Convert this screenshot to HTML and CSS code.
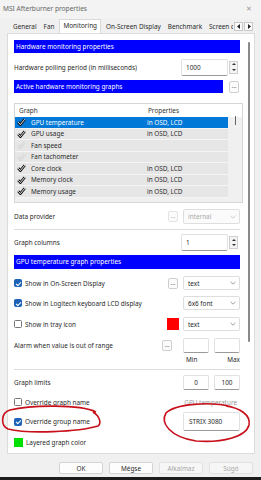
FILE: index.html
```html
<!DOCTYPE html>
<html lang="hu">
<head>
    <meta charset="UTF-8">
    <title>MSI Afterburner properties</title>
    <link rel="stylesheet" href="styles.css">
</head>
<body>
    <div class="window">
        <div class="titlebar">
            <span class="title">MSI Afterburner properties</span>
            <span class="close">✕</span>
        </div>

        <div class="tabs">
            <span class="tab">General</span>
            <span class="tab">Fan</span>
            <span class="tab active">Monitoring</span>
            <span class="tab">On-Screen Display</span>
            <span class="tab">Benchmark</span>
            <span class="tab cut">Screen c</span>
            <span class="tab-arrows">
                <span class="arrow"><svg width="4" height="5" viewBox="0 0 4 5"><path d="M3 0 L0 2.5 L3 5 Z" fill="#222"/></svg></span>
                <span class="arrow"><svg width="4" height="5" viewBox="0 0 4 5"><path d="M1 0 L4 2.5 L1 5 Z" fill="#222"/></svg></span>
            </span>
        </div>

        <div class="panel">
            <div class="content">
                <div class="header h1">Hardware monitoring properties</div>

                <div class="row polling">
                    <span class="label">Hardware polling period (in milliseconds)</span>
                    <span class="spinbox"><span class="field">1000</span><span class="spin"><i class="up"></i><i class="down"></i></span></span>
                </div>

                <div class="row graphs-head">
                    <div class="header h2">Active hardware monitoring graphs</div>
                    <span class="dots">...</span>
                </div>

                <div class="list">
                    <div class="list-head"><span class="col1">Graph</span><span class="col2">Properties</span></div>
                    <div class="item selected"><span class="chk"><svg width="9" height="8" viewBox="0 0 9 8"><path d="M1.2 4.2 L3.4 6.6 L7.8 1.2" fill="none" stroke="#111" stroke-width="2.6"/><path d="M1.2 4.2 L3.4 6.6 L7.8 1.2" fill="none" stroke="#fff" stroke-width="0.9"/></svg></span><span class="col1">GPU temperature</span><span class="col2">in OSD, LCD</span></div>
                    <div class="item"><span class="chk"><svg width="9" height="8" viewBox="0 0 9 8"><path d="M1.2 4.2 L3.4 6.6 L7.8 1.2" fill="none" stroke="#111" stroke-width="2.6"/><path d="M1.2 4.2 L3.4 6.6 L7.8 1.2" fill="none" stroke="#fff" stroke-width="0.9"/></svg></span><span class="col1">GPU usage</span><span class="col2">in OSD, LCD</span></div>
                    <div class="item"><span class="chk faint"><svg width="9" height="8" viewBox="0 0 9 8"><path d="M1.2 4.2 L3.4 6.6 L7.8 1.2" fill="none" stroke="#d4d4d4" stroke-width="2.6"/><path d="M1.2 4.2 L3.4 6.6 L7.8 1.2" fill="none" stroke="#ececec" stroke-width="0.9"/></svg></span><span class="col1">Fan speed</span><span class="col2"></span></div>
                    <div class="item"><span class="chk faint"><svg width="9" height="8" viewBox="0 0 9 8"><path d="M1.2 4.2 L3.4 6.6 L7.8 1.2" fill="none" stroke="#d4d4d4" stroke-width="2.6"/><path d="M1.2 4.2 L3.4 6.6 L7.8 1.2" fill="none" stroke="#ececec" stroke-width="0.9"/></svg></span><span class="col1">Fan tachometer</span><span class="col2"></span></div>
                    <div class="item"><span class="chk"><svg width="9" height="8" viewBox="0 0 9 8"><path d="M1.2 4.2 L3.4 6.6 L7.8 1.2" fill="none" stroke="#111" stroke-width="2.6"/><path d="M1.2 4.2 L3.4 6.6 L7.8 1.2" fill="none" stroke="#fff" stroke-width="0.9"/></svg></span><span class="col1">Core clock</span><span class="col2">in OSD, LCD</span></div>
                    <div class="item"><span class="chk"><svg width="9" height="8" viewBox="0 0 9 8"><path d="M1.2 4.2 L3.4 6.6 L7.8 1.2" fill="none" stroke="#111" stroke-width="2.6"/><path d="M1.2 4.2 L3.4 6.6 L7.8 1.2" fill="none" stroke="#fff" stroke-width="0.9"/></svg></span><span class="col1">Memory clock</span><span class="col2">in OSD, LCD</span></div>
                    <div class="item"><span class="chk"><svg width="9" height="8" viewBox="0 0 9 8"><path d="M1.2 4.2 L3.4 6.6 L7.8 1.2" fill="none" stroke="#111" stroke-width="2.6"/><path d="M1.2 4.2 L3.4 6.6 L7.8 1.2" fill="none" stroke="#fff" stroke-width="0.9"/></svg></span><span class="col1">Memory usage</span><span class="col2">in OSD, LCD</span></div>
                    <div class="list-scroll"></div>
                </div>

                <div class="row provider">
                    <span class="label">Data provider</span>
                    <span class="dots disabled">...</span>
                    <span class="combo disabled">internal<svg width="6" height="4" viewBox="0 0 6 4"><path d="M0.5 0.8 L3 3.2 L5.5 0.8" fill="none" stroke="#bbb" stroke-width="0.7"/></svg></span>
                </div>

                <div class="sep"></div>

                <div class="row columns">
                    <span class="label">Graph columns</span>
                    <span class="spinbox"><span class="field">1</span><span class="spin"><i class="up"></i><i class="down"></i></span></span>
                </div>

                <div class="header h3">GPU temperature graph properties</div>

                <div class="row opt osd">
                    <span class="box on"></span><span class="label">Show in On-Screen Display</span>
                    <span class="dots">...</span>
                    <span class="combo">text<svg width="6" height="4" viewBox="0 0 6 4"><path d="M0.5 0.8 L3 3.2 L5.5 0.8" fill="none" stroke="#777" stroke-width="0.7"/></svg></span>
                </div>

                <div class="row opt lcd">
                    <span class="box on"></span><span class="label">Show in Logitech keyboard LCD display</span>
                    <span class="combo">6x6 font<svg width="6" height="4" viewBox="0 0 6 4"><path d="M0.5 0.8 L3 3.2 L5.5 0.8" fill="none" stroke="#777" stroke-width="0.7"/></svg></span>
                </div>

                <div class="row opt tray">
                    <span class="box"></span><span class="label">Show in tray icon</span>
                    <span class="swatch red"></span>
                    <span class="combo">text<svg width="6" height="4" viewBox="0 0 6 4"><path d="M0.5 0.8 L3 3.2 L5.5 0.8" fill="none" stroke="#777" stroke-width="0.7"/></svg></span>
                </div>

                <div class="row alarm">
                    <span class="label">Alarm when value is out of range</span>
                    <span class="dots">...</span>
                    <span class="field small"></span>
                    <span class="field small"></span>
                </div>
                <div class="minmax"><span>Min</span><span>Max</span></div>

                <div class="sep"></div>

                <div class="row limits">
                    <span class="label">Graph limits</span>
                    <span class="field small center">0</span>
                    <span class="field small center">100</span>
                </div>

                <div class="row opt gname">
                    <span class="box"></span><span class="label">Override graph name</span>
                    <span class="hint">GPU temperature</span>
                </div>

                <div class="row opt group">
                    <span class="box on"></span><span class="label">Override group name</span>
                    <span class="field wide">STRIX 3080</span>
                </div>

                <div class="row opt layered">
                    <span class="swatch green"></span><span class="label">Layered graph color</span>
                </div>
            </div>
            <div class="vscroll"><div class="thumb"></div></div>
        </div>

        <div class="buttons">
            <span class="btn">OK</span>
            <span class="btn">Mégse</span>
            <span class="btn disabled">Alkalmaz</span>
            <span class="btn disabled">Súgó</span>
        </div>

        <!-- kézzel rajzolt piros karikák -->
        <svg class="marks" width="261" height="480" viewBox="0 0 261 480">
            <path d="M96 412 C80 404 30 405 10 410 C0 413 1 426 8 429 C28 434 78 432 98 426 C101 424 101 417 93 412" fill="none" stroke="#c8101a" stroke-width="1.6"/>
            <path d="M232 407 C210 401 175 404 166 413 C160 423 170 437 196 441 C222 443 246 437 249 425 C251 415 240 408 226 406" fill="none" stroke="#c8101a" stroke-width="1.6"/>
        </svg>
    </div>
</body>
</html>
```

FILE: styles.css
```css
*{
    margin:0;
    padding:0;
    box-sizing:border-box;
}
body{
    width:261px;
    height:480px;
    overflow:hidden;
    font-family:"Noto Sans","Open Sans",sans-serif;
    font-size:6.4px;
    color:#2a2a2a;
    background:#f0f0f0;
}
.window{
    position:relative;
    width:261px;
    height:480px;
    background:#f0f0f0;
    border-bottom:3px solid #1c1c1c;
}

/* title */
.titlebar{
    height:19px;
    display:flex;
    align-items:center;
    justify-content:space-between;
    padding:0 9px 2px 3px;
    background:#f3f3f3;
}
.title{
    color:#666;
    font-size:6.6px;
}
.close{
    color:#999;
    font-size:7px;
}

/* tabs */
.tabs{
    height:14px;
    display:flex;
    align-items:flex-end;
    padding-left:10px;
}
.tab{
    height:12px;
    line-height:11px;
    padding:0 3px;
    margin-right:1px;
    white-space:nowrap;
}
.tab.active{
    height:14px;
    line-height:12px;
    background:#fff;
    border:1px solid #d9d9d9;
    border-bottom:none;
    padding:0 3px;
    margin:0 2px 0 1px;
}
.tab.cut{
    width:27px;
    overflow:hidden;
    padding-right:0;
}
.tab-arrows{
    display:flex;
    gap:1px;
    margin-bottom:2px;
}
.arrow{
    width:9px;
    height:9px;
    background:#fafafa;
    border:1px solid #c8c8c8;
    display:flex;
    align-items:center;
    justify-content:center;
}

/* panel */
.panel{
    margin:0 6px 0 7px;
    height:421px;
    background:#fff;
    border:1px solid #dcdcdc;
    display:flex;
}
.content{
    width:232px;
    padding:6px 0 0 6px;
}
.vscroll{
    flex:1;
    position:relative;
}
.vscroll .thumb{
    margin:8px 0 0 8px;
    width:2px;
    height:300px;
    background:#8a8a8a;
    border-radius:1px;
}

.header{
    height:13px;
    line-height:13px;
    background:#0000ff;
    color:#fff;
    padding-left:2px;
    white-space:nowrap;
}
.h3{
    height:14px;
    line-height:14px;
    margin-top:4px;
}

.row{
    display:flex;
    align-items:center;
}
.label{
    flex:1;
    white-space:nowrap;
}

/* inputs */
.field{
    background:#fff;
    border:1px solid #e1e1e1;
    border-bottom-color:#9a9a9a;
    border-radius:2px;
    height:16px;
    line-height:14px;
    padding-left:4px;
}
.spinbox{
    display:flex;
    align-items:center;
    width:57px;
    margin-right:2px;
}
.spinbox .field{
    width:47px;
    height:17px;
    line-height:15px;
}
.spin{
    width:9px;
    height:13px;
    margin-left:1px;
    border:1px solid #cfcfcf;
    background:#f3f3f3;
    display:flex;
    flex-direction:column;
    align-items:center;
    justify-content:space-around;
}
.spin i{
    width:0;
    height:0;
    border-left:2px solid transparent;
    border-right:2px solid transparent;
}
.spin .up{
    border-bottom:2px solid #333;
}
.spin .down{
    border-top:2px solid #333;
}
.small{
    width:26px;
    height:15px;
    margin-left:5px;
}
.small:first-of-type{
    margin-left:0;
}
.center{
    text-align:center;
    padding-left:0;
}
.wide{
    width:57px;
    height:19px;
    line-height:17px;
    padding-left:5px;
}

.dots{
    width:10px;
    height:11px;
    line-height:7px;
    text-align:center;
    color:#777;
    background:#fbfbfb;
    border:1px solid #cfcfcf;
    border-radius:2px;
    margin-right:5px;
}
.dots.disabled{
    color:#bbb;
    border-color:#e3e3e3;
}
.combo{
    width:57px;
    height:14px;
    border:1px solid #dedede;
    border-radius:2px;
    background:#fff;
    display:flex;
    align-items:center;
    justify-content:space-between;
    padding:0 3px 0 4px;
}
.combo.disabled{
    color:#aaa;
    background:#fbfbfb;
    height:15px;
}

.polling{
    height:18px;
    margin-top:5px;
}
.graphs-head{
    height:13px;
    margin-top:4px;
}
.graphs-head .h2{
    width:209px;
}
.graphs-head .dots{
    margin:0 0 0 6px;
    height:12px;
}

/* list */
.list{
    position:relative;
    margin-top:10px;
    height:100px;
    width:229px;
    border:1px solid #d6d6d6;
    background:#f0f0f0;
}
.list-head{
    height:13px;
    display:flex;
    align-items:center;
    background:#fff;
    padding-left:4px;
    color:#333;
}
.list-head .col1{
    width:129px;
}
.item{
    height:11.5px;
    width:213px;
    display:flex;
    align-items:center;
    background:#e6e6e6;
    border-bottom:1px solid #f4f4f4;
}
.item .chk{
    width:16px;
    padding-left:2px;
    display:flex;
}
.item .col1{
    width:116px;
}
.item.selected{
    background:#0078d7;
    color:#fff;
}
.list-scroll{
    position:absolute;
    left:220px;
    top:12px;
    width:1px;
    height:9px;
    background:#666;
}

.provider{
    height:15px;
    margin-top:6px;
}
.sep{
    height:1px;
    background:#dcdcdc;
    margin-top:5px;
    width:226px;
}
.columns{
    height:17px;
    margin-top:4px;
}

.opt .box{
    width:8px;
    height:8px;
    border:1px solid #777;
    border-radius:1.5px;
    background:#fff;
    margin-right:3px;
    position:relative;
}
.opt .box.on{
    background:#1e62b8;
    border-color:#1e62b8;
}
.opt .box.on::after{
    content:"";
    position:absolute;
    left:2px;
    top:0.5px;
    width:2px;
    height:4px;
    border:solid #fff;
    border-width:0 1px 1px 0;
    transform:rotate(45deg);
}
.swatch{
    width:12px;
    height:12px;
    margin-right:4px;
}
.swatch.red{
    background:#ff0000;
}
.swatch.green{
    width:9px;
    height:9px;
    background:#00e000;
    margin-right:3px;
}

.osd{
    height:14px;
    margin-top:7px;
}
.lcd{
    height:14px;
    margin-top:6px;
}
.tray{
    height:14px;
    margin-top:7px;
}
.alarm{
    height:15px;
    margin-top:7px;
}
.alarm .dots{
    margin-right:6px;
}
.minmax{
    display:flex;
    justify-content:space-between;
    width:226px;
    padding-left:172px;
    height:8px;
    line-height:8px;
    margin-top:3px;
}
.limits{
    height:15px;
    margin-top:5px;
}
.gname{
    height:12px;
    margin-top:6px;
}
.hint{
    color:#999;
    margin-right:3px;
}
.group{
    height:19px;
    margin-top:4px;
}
.layered{
    height:10px;
    margin-top:6px;
}

/* bottom buttons */
.buttons{
    display:flex;
    justify-content:flex-end;
    gap:6px;
    padding:8px 8px 0 0;
}
.btn{
    width:44px;
    height:12px;
    line-height:11px;
    text-align:center;
    background:#fdfdfd;
    border:1px solid #d4d4d4;
    border-radius:2px;
}
.btn.disabled{
    color:#a8a8a8;
    background:#f6f6f6;
    border-color:#e2e2e2;
}

.marks{
    position:absolute;
    left:0;
    top:0;
    pointer-events:none;
}
```
